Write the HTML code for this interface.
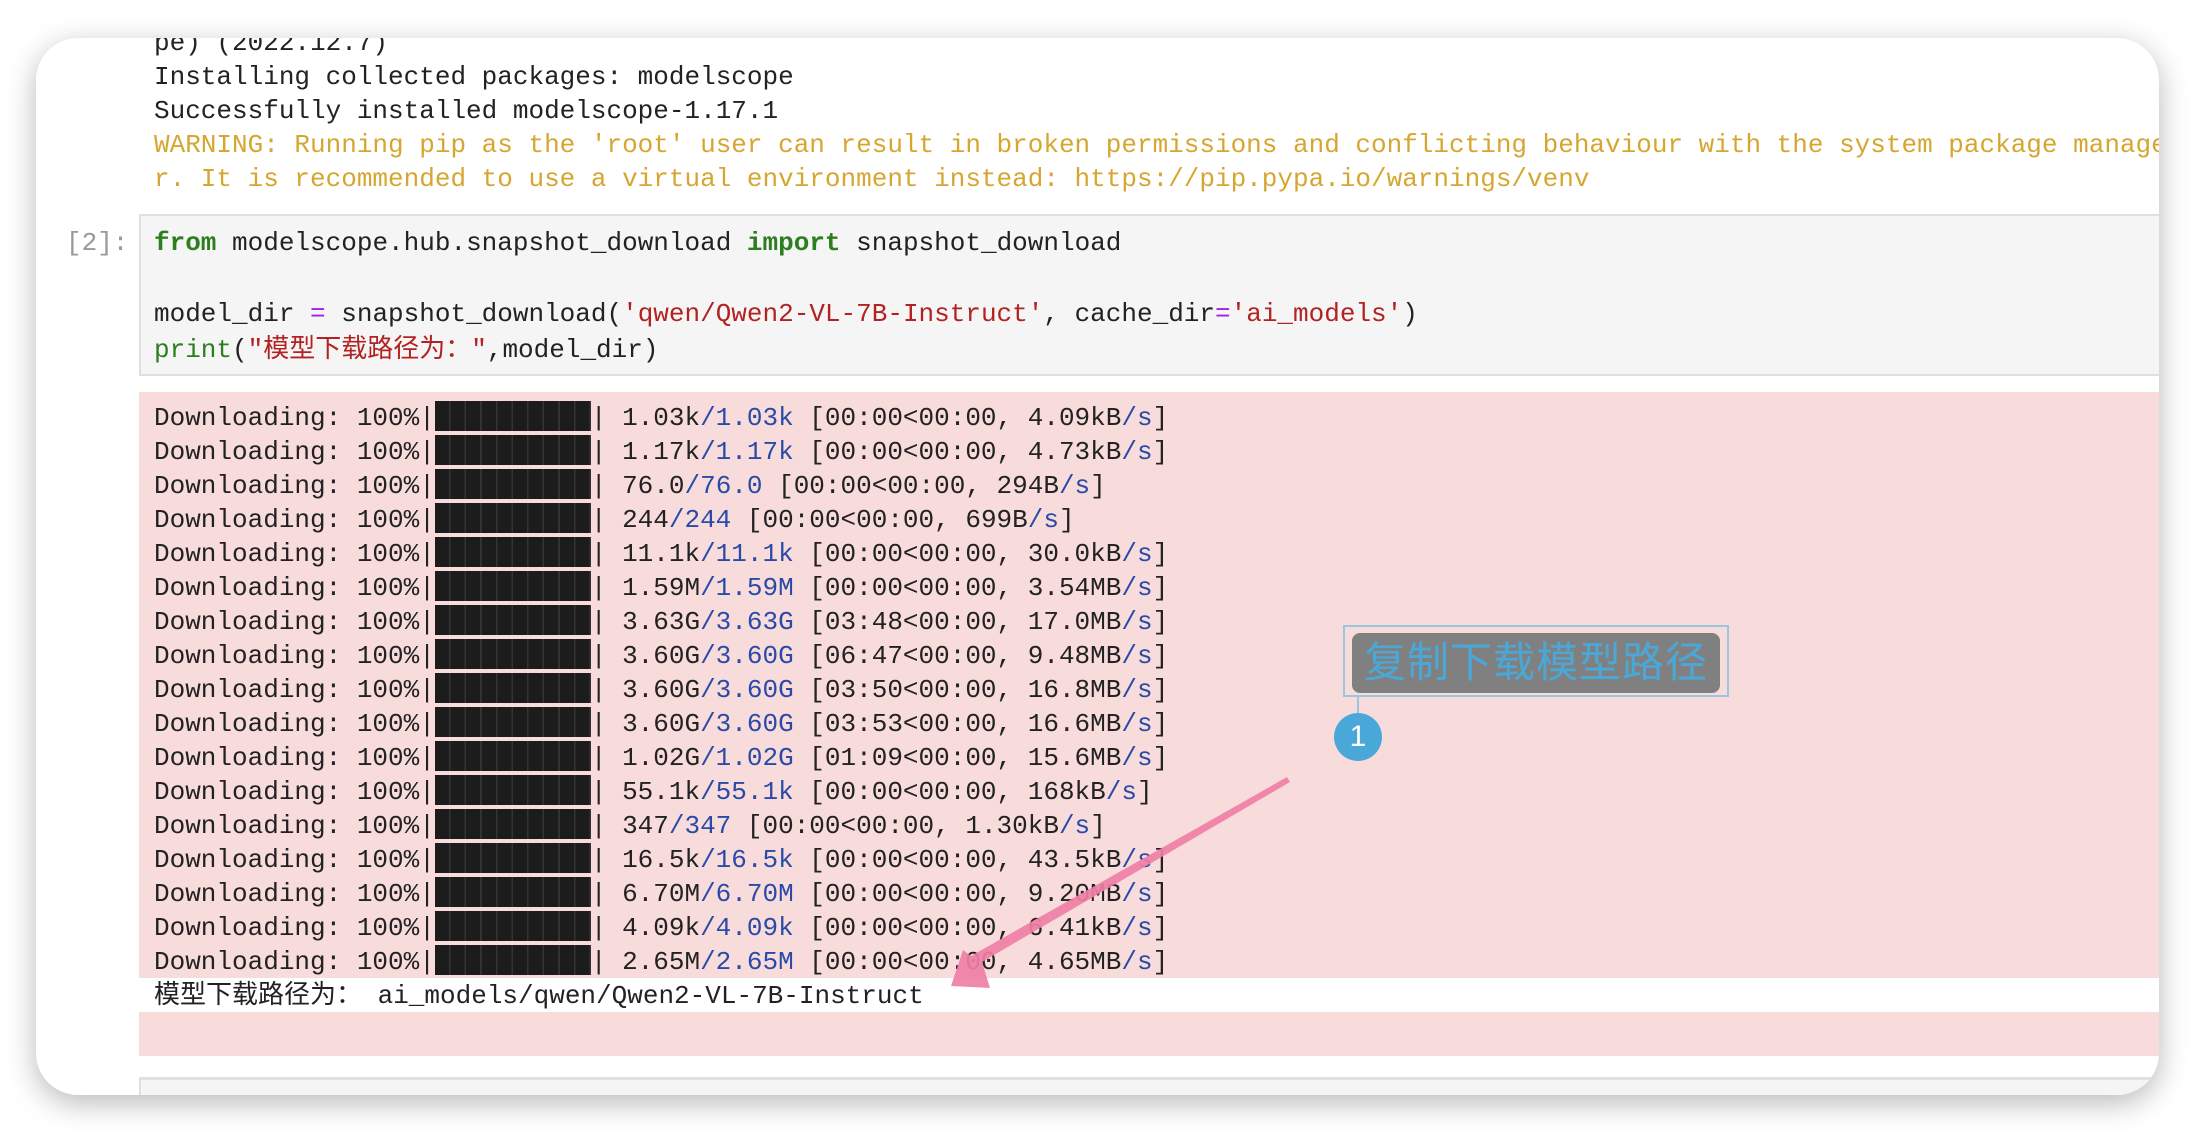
<!DOCTYPE html>
<html><head><meta charset="utf-8"><style>
html,body{margin:0;padding:0;width:2194px;height:1132px;background:#fff;overflow:hidden}
.card{position:absolute;left:36px;top:38px;width:2123px;height:1057px;border-radius:42px;background:#fff;overflow:hidden;box-shadow:0 8px 30px rgba(0,0,0,.28)}
.m{font-family:"Liberation Mono","Noto Sans CJK SC",monospace;font-size:26px;position:absolute;left:118px;color:#222}
.m div{white-space:pre}
.l{height:34px;line-height:34px}
.w{color:#d6a630}
.code{position:absolute;left:103px;top:176px;width:2100px;height:162px;background:#f5f5f5;border:2px solid #e0e0e0;box-sizing:border-box}
.cl{height:35.5px;line-height:35.5px}
.k{color:#2e7d1f;font-weight:bold}
.s{color:#b22222}
.p{color:#a020f0}
.g{color:#2e7d1f}
.b{color:#2a4aa8}
.pink{position:absolute;left:103px;top:354px;width:2100px;height:664px;background:#f8dcdc}
.white{position:absolute;left:103px;top:940px;width:2100px;height:34px;background:#fff}
.bar{display:inline-block;width:156px;height:30px;background:#1c1c1c;vertical-align:-6px;background-image:repeating-linear-gradient(90deg,#1c1c1c 0 14px,#333 14px 15.6px)}
.next{position:absolute;left:103px;top:1039px;width:2100px;height:60px;background:#f5f5f5;border-top:3px solid #e0e0e0;border-left:2px solid #e0e0e0}
</style></head><body>
<div class="card">
<div class="m" style="top:-12px"><div class="l">pe) (2022.12.7)</div><div class="l">Installing collected packages: modelscope</div><div class="l">Successfully installed modelscope-1.17.1</div><div class="l w">WARNING: Running pip as the 'root' user can result in broken permissions and conflicting behaviour with the system package manage</div><div class="l w">r. It is recommended to use a virtual environment instead: https://pip.pypa.io/warnings/venv</div></div>
<div class="m" style="left:30px;top:188px;color:#999;line-height:35.5px">[2]:</div>
<div class="code"></div>
<div class="m" style="top:188px"><div class="cl"><span class="k">from</span> modelscope.hub.snapshot_download <span class="k">import</span> snapshot_download</div><div class="cl"> </div><div class="cl">model_dir <span class="p">=</span> snapshot_download(<span class="s">'qwen/Qwen2-VL-7B-Instruct'</span>, cache_dir<span class="p">=</span><span class="s">'ai_models'</span>)</div><div class="cl"><span class="g">print</span>(<span class="s">"模型下载路径为："</span>,model_dir)</div></div>
<div class="pink"></div>
<div class="white"></div>
<div class="m" style="top:363px"><div class="l">Downloading: 100%|<span class="bar"></span>| 1.03k<span class="b">/1.03k</span> [00:00&lt;00:00, 4.09kB<span class="b">/s</span>]</div><div class="l">Downloading: 100%|<span class="bar"></span>| 1.17k<span class="b">/1.17k</span> [00:00&lt;00:00, 4.73kB<span class="b">/s</span>]</div><div class="l">Downloading: 100%|<span class="bar"></span>| 76.0<span class="b">/76.0</span> [00:00&lt;00:00, 294B<span class="b">/s</span>]</div><div class="l">Downloading: 100%|<span class="bar"></span>| 244<span class="b">/244</span> [00:00&lt;00:00, 699B<span class="b">/s</span>]</div><div class="l">Downloading: 100%|<span class="bar"></span>| 11.1k<span class="b">/11.1k</span> [00:00&lt;00:00, 30.0kB<span class="b">/s</span>]</div><div class="l">Downloading: 100%|<span class="bar"></span>| 1.59M<span class="b">/1.59M</span> [00:00&lt;00:00, 3.54MB<span class="b">/s</span>]</div><div class="l">Downloading: 100%|<span class="bar"></span>| 3.63G<span class="b">/3.63G</span> [03:48&lt;00:00, 17.0MB<span class="b">/s</span>]</div><div class="l">Downloading: 100%|<span class="bar"></span>| 3.60G<span class="b">/3.60G</span> [06:47&lt;00:00, 9.48MB<span class="b">/s</span>]</div><div class="l">Downloading: 100%|<span class="bar"></span>| 3.60G<span class="b">/3.60G</span> [03:50&lt;00:00, 16.8MB<span class="b">/s</span>]</div><div class="l">Downloading: 100%|<span class="bar"></span>| 3.60G<span class="b">/3.60G</span> [03:53&lt;00:00, 16.6MB<span class="b">/s</span>]</div><div class="l">Downloading: 100%|<span class="bar"></span>| 1.02G<span class="b">/1.02G</span> [01:09&lt;00:00, 15.6MB<span class="b">/s</span>]</div><div class="l">Downloading: 100%|<span class="bar"></span>| 55.1k<span class="b">/55.1k</span> [00:00&lt;00:00, 168kB<span class="b">/s</span>]</div><div class="l">Downloading: 100%|<span class="bar"></span>| 347<span class="b">/347</span> [00:00&lt;00:00, 1.30kB<span class="b">/s</span>]</div><div class="l">Downloading: 100%|<span class="bar"></span>| 16.5k<span class="b">/16.5k</span> [00:00&lt;00:00, 43.5kB<span class="b">/s</span>]</div><div class="l">Downloading: 100%|<span class="bar"></span>| 6.70M<span class="b">/6.70M</span> [00:00&lt;00:00, 9.20MB<span class="b">/s</span>]</div><div class="l">Downloading: 100%|<span class="bar"></span>| 4.09k<span class="b">/4.09k</span> [00:00&lt;00:00, 6.41kB<span class="b">/s</span>]</div><div class="l">Downloading: 100%|<span class="bar"></span>| 2.65M<span class="b">/2.65M</span> [00:00&lt;00:00, 4.65MB<span class="b">/s</span>]</div><div class="l">模型下载路径为： ai_models/qwen/Qwen2-VL-7B-Instruct</div></div>
<div class="next"></div>
</div>
<div style="position:absolute;left:1343px;top:625px;width:382px;height:68px;border:2px solid #9cc6e0"></div>
<div style="position:absolute;left:1352px;top:633px;width:368px;height:60px;border-radius:8px;background:#808080;font-family:'Liberation Sans','Noto Sans CJK SC',sans-serif;font-size:42px;line-height:60px;color:#4aa8d8;text-align:center;letter-spacing:1px">复制下载模型路径</div>
<div style="position:absolute;left:1357px;top:695px;width:2px;height:20px;background:#9cc6e0"></div>
<div style="position:absolute;left:1334px;top:713px;width:48px;height:48px;border-radius:50%;background:#4aa8d8;color:#fff;font-family:'Liberation Sans',sans-serif;font-size:30px;line-height:48px;text-align:center">1</div>
<svg style="position:absolute;left:0;top:0" width="2194" height="1132">
<polygon points="1287,777 1290,782 982,962 990,988 951,986 963,950 971,956" fill="#ef7fa6" opacity="0.92"/>
</svg>
</body></html>
